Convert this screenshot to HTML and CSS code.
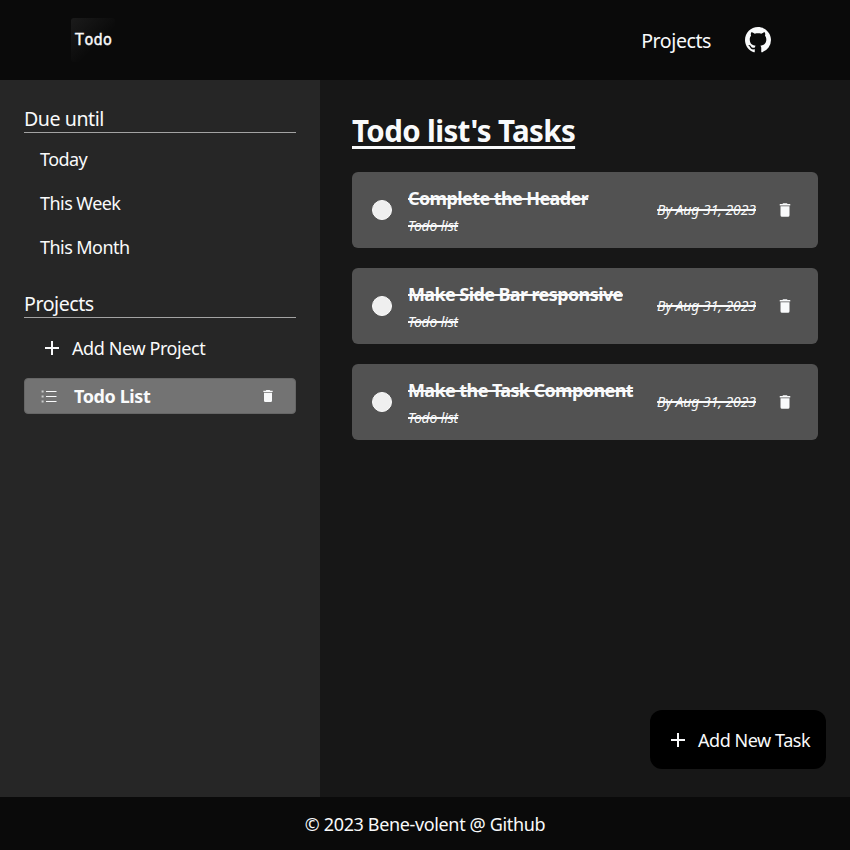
FILE: index.html
```html
<!DOCTYPE html>
<html lang="en">
<head>
<meta charset="utf-8">
<title>Todo</title>
<link rel="stylesheet" href="styles.css">
</head>
<body>
<svg class="defs" width="0" height="0">
  <symbol id="trash" viewBox="0 0 24 24"><path fill="currentColor" d="M19 4h-3.5l-1-1h-5l-1 1H5v2h14M6 19a2 2 0 0 0 2 2h8a2 2 0 0 0 2-2V7H6v12Z"/></symbol>
  <symbol id="plus" viewBox="0 0 24 24"><path fill="currentColor" d="M19 13h-6v6h-2v-6H5v-2h6V5h2v6h6z"/></symbol>
</svg>
<header class="header">
  <div class="logo">Todo</div>
  <nav class="nav">
    <a class="nav-link">Projects</a>
    <svg class="github" viewBox="0 0 16 16"><path fill="currentColor" d="M8 0C3.58 0 0 3.58 0 8c0 3.54 2.29 6.53 5.47 7.59.4.07.55-.17.55-.38 0-.19-.01-.82-.01-1.49-2.01.37-2.53-.49-2.69-.94-.09-.23-.48-.94-.82-1.13-.28-.15-.68-.52-.01-.53.63-.01 1.08.58 1.23.82.72 1.21 1.87.87 2.33.66.07-.52.28-.87.51-1.07-1.78-.2-3.64-.89-3.64-3.95 0-.87.31-1.59.82-2.15-.08-.2-.36-1.02.08-2.12 0 0 .67-.21 2.2.82.64-.18 1.32-.27 2-.27s1.36.09 2 .27c1.53-1.04 2.2-.82 2.2-.82.44 1.1.16 1.92.08 2.12.51.56.82 1.27.82 2.15 0 3.07-1.87 3.75-3.65 3.95.29.25.54.73.54 1.48 0 1.07-.01 1.93-.01 2.2 0 .21.15.46.55.38A8.01 8.01 0 0 0 16 8c0-4.42-3.58-8-8-8z"/></svg>
  </nav>
</header>
<div class="body">
  <aside class="sidebar">
    <h2 class="side-title">Due until</h2>
    <ul class="dates">
      <li>Today</li>
      <li>This Week</li>
      <li>This Month</li>
    </ul>
    <h2 class="side-title projects-title">Projects</h2>
    <div class="add-project"><svg class="icon24"><use href="#plus"/></svg><span>Add New Project</span></div>
    <div class="project">
      <svg class="list-icon" viewBox="0 0 16 14"><g fill="none" stroke="currentColor"><path stroke-width="1.1" d="M5 2.5h10.5M5 7.5h10.5M5 12.5h10.5"/><path stroke-width="2" opacity=".65" d="M.6 2.5h2M.6 7.5h2M.6 12.5h2"/></g></svg>
      <span class="project-name">Todo List</span>
      <svg class="trash-small"><use href="#trash"/></svg>
    </div>
  </aside>
  <main class="main">
    <h1 class="title"><span>Todo list's Tasks</span></h1>
    <div class="tasks">
      <article class="task">
        <span class="check"></span>
        <div class="info"><h3 class="name">Complete the Header</h3><p class="sub">Todo list</p></div>
        <span class="due">By Aug 31, 2023</span>
        <svg class="trash"><use href="#trash"/></svg>
      </article>
      <article class="task">
        <span class="check"></span>
        <div class="info"><h3 class="name">Make Side Bar responsive</h3><p class="sub">Todo list</p></div>
        <span class="due">By Aug 31, 2023</span>
        <svg class="trash"><use href="#trash"/></svg>
      </article>
      <article class="task">
        <span class="check"></span>
        <div class="info"><h3 class="name">Make the Task Component</h3><p class="sub">Todo list</p></div>
        <span class="due">By Aug 31, 2023</span>
        <svg class="trash"><use href="#trash"/></svg>
      </article>
    </div>
    <button class="add-task"><svg class="icon24"><use href="#plus"/></svg><span>Add New Task</span></button>
  </main>
</div>
<footer class="footer"><span>© 2023 Bene-volent @ Github</span></footer>
</body>
</html>
```
FILE: styles.css
```css
* { box-sizing: border-box; margin: 0; padding: 0; }
body {
  height: 850px;
  display: flex;
  flex-direction: column;
  overflow: hidden;
  background: #0a0a0a;
  color: #f9fafb;
  font: 18px/28px "Segoe UI", "Noto Sans", sans-serif;
}
.defs { position: absolute; }
svg { display: block; flex: none; }
ul { list-style: none; }
.header {
  height: 80px;
  padding: 0 79px 0 71px;
  display: flex;
  justify-content: space-between;
}
.logo {
  width: 44px;
  height: 44px;
  margin-top: 18px;
  padding-left: 1px;
  border-radius: 3px;
  background: linear-gradient(135deg, #1b1b1b, #0a0a0a 60%);
  font: 15.5px/45px "DejaVu Sans Mono", monospace;
  -webkit-text-stroke: .35px currentColor;
  text-align: center;
}
.nav { display: flex; align-items: center; gap: 34px; }
.nav-link { font-size: 19.6px; letter-spacing: -.45px; padding-top: 2px; }
.github { width: 26px; height: 26px; }
.body { height: 717px; display: flex; }
.sidebar { width: 320px; padding: 24px; background: #262626; }
.side-title {
  height: 29px;
  border-bottom: 1px solid #a3a3a3;
  font-size: 19.6px;
  font-weight: 400;
  line-height: 29px;
  letter-spacing: -.45px;
}
.dates { padding: 4px 16px 0; }
.dates li { height: 44px; line-height: 44px; letter-spacing: -.55px; }
.projects-title { margin-top: 20px; }
.add-project { height: 60px; padding-left: 16px; display: flex; align-items: center; gap: 8px; letter-spacing: -.4px; }
.icon24 { width: 24px; height: 24px; }
.project {
  height: 36px;
  padding: 0 19px 0 16px;
  display: flex;
  align-items: center;
  border: 1px solid #666;
  border-radius: 4px;
  background: #737373;
  font-weight: 700;
}
.list-icon { width: 16px; height: 14px; }
.project-name { margin-left: 17px; flex: 1; letter-spacing: -.4px; }
.trash-small { width: 16px; height: 16px; }
.main { position: relative; flex: 1; padding: 31px 32px 32px; background: #171717; }
.title {
  height: 41px;
  font-size: 29.5px;
  line-height: 40px;
  letter-spacing: -.62px;
  text-decoration: underline;
  text-decoration-thickness: 2.5px;
  text-underline-offset: 4px;
}
.tasks { display: flex; flex-direction: column; gap: 20px; margin-top: 20px; }
.task {
  height: 76px;
  padding: 0 24px 0 20px;
  display: flex;
  align-items: center;
  border-radius: 6px;
  background: #525252;
}
.check { width: 20px; height: 20px; border: 1px solid #fafafa; border-radius: 50%; background: #efefef; }
.info { margin-left: 16px; flex: 1; white-space: nowrap; }
.name { font-size: 18px; line-height: 28px; letter-spacing: -.6px; }
.name, .sub, .due { text-decoration: line-through 2px; }
.sub, .due { font-size: 14px; font-style: italic; letter-spacing: -.06px; }
.sub { line-height: 24px; padding-top: 2px; margin-bottom: -2px; letter-spacing: -.15px; }
.due { margin-right: 20px; }
.trash { width: 18px; height: 18px; }
.add-task {
  position: absolute;
  right: 24px;
  bottom: 28px;
  width: 176px;
  height: 59px;
  padding-left: 16px;
  display: flex;
  align-items: center;
  gap: 8px;
  border: 0;
  border-radius: 12px;
  background: #000;
  color: inherit;
  font: inherit;
  letter-spacing: -.45px;
  white-space: nowrap;
}
.footer { height: 53px; line-height: 54px; text-align: center; letter-spacing: -.36px; }
```
